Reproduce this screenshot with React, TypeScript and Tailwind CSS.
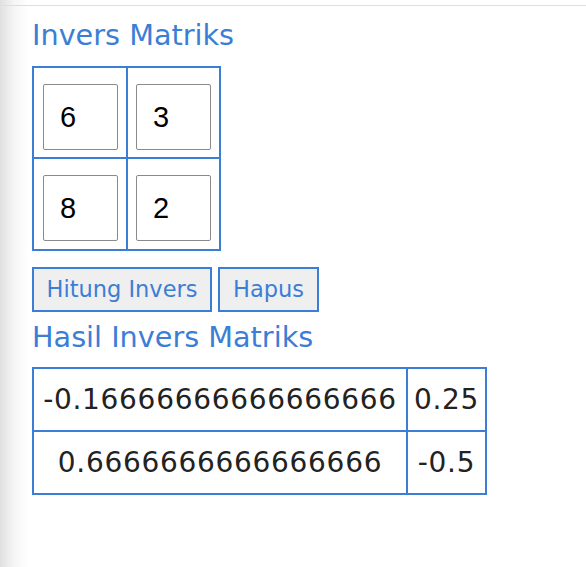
import { useState } from 'react'

const FONT = "font-['DejaVu_Sans',sans-serif]"

export default function App() {
  const [vals, setVals] = useState(['6', '3', '8', '2'])
  const result = [
    ['-0.16666666666666666', '0.25'],
    ['0.6666666666666666', '-0.5'],
  ]

  return (
    <div className={`min-h-[567px] bg-[linear-gradient(to_right,#e0e0e0,#f5f5f5_14px,#ffffff_28px)] pt-[5px] ${FONT}`}>
      <div className="border-t border-[#dedede] pl-8 pt-[11px] pb-10">
        <h2 className="text-[28.7px] leading-[36px] text-[#3b7ed6]">Invers Matriks</h2>

        {/* input matrix */}
        <div className="mt-[13px] inline-grid grid-cols-[94px_91px] border-2 border-[#3b7ed6]">
          {vals.map((v, i) => (
            <div
              key={i}
              className={`flex items-start pt-[16px] ${i % 2 === 0 ? 'border-r-2 border-[#3b7ed6] pl-[9px]' : 'pl-[8px]'} ${i < 2 ? 'h-[91px] border-b-2 border-[#3b7ed6]' : 'h-[90px]'}`}
            >
              <input
                value={v}
                onChange={(e) => {
                  const next = [...vals]
                  next[i] = e.target.value
                  setVals(next)
                }}
                className="h-[66px] w-[75px] rounded-[2px] border border-[#8a8a8a] bg-white pl-4 font-['Liberation_Sans',sans-serif] text-[29px] text-black outline-none"
              />
            </div>
          ))}
        </div>

        <div className="mt-[16px] flex gap-[6px]">
          <button className="h-[45px] w-[180px] border-2 border-[#3b7ed6] bg-[#efefef] text-[22.5px] text-[#3b7ed6]">
            Hitung Invers
          </button>
          <button className="h-[45px] w-[101px] border-2 border-[#3b7ed6] bg-[#efefef] text-[22.5px] text-[#3b7ed6]">
            Hapus
          </button>
        </div>

        <h2 className="mt-[7px] text-[28.7px] leading-[36px] text-[#3b7ed6]">Hasil Invers Matriks</h2>

        {/* result matrix */}
        <div className="mt-[12px] inline-grid grid-cols-[374px_77px] border-2 border-[#3b7ed6] text-[28px] tracking-[0.7px] text-[#222]">
          {result.flat().map((c, i) => (
            <div
              key={i}
              className={`flex items-center justify-center ${i % 2 === 0 ? 'border-r-2 border-[#3b7ed6]' : ''} ${i < 2 ? 'h-[63px] border-b-2 border-[#3b7ed6]' : 'h-[61px]'}`}
            >
              {c}
            </div>
          ))}
        </div>
      </div>
    </div>
  )
}
